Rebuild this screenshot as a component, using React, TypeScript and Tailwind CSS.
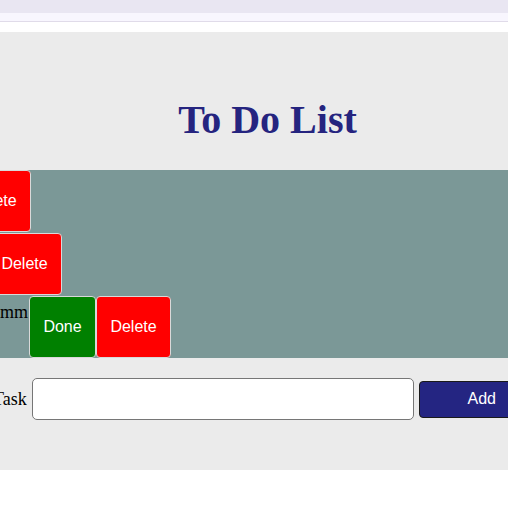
// To Do List — scrolled page view

const rows = [
  { text: "Buy milk", offset: "-ml-[111px]" },
  { text: "Walk the dog", offset: "-ml-[80px]" },
];

function Btn({ kind, children }: { kind: "done" | "delete"; children: string }) {
  return (
    <button
      className={
        (kind === "done" ? "bg-[#008000] w-[67px]" : "bg-[#ff0000] w-[75px]") +
        " h-[62px] shrink-0 rounded-[4px] border border-[#d9d9d9] text-white text-[16px] font-['Liberation_Sans',Arial,sans-serif]"
      }
    >
      {children}
    </button>
  );
}

export default function App() {
  return (
    <div className="min-h-screen bg-white overflow-hidden font-['Liberation_Serif','Times_New_Roman',serif]">
      {/* browser-ish top strip */}
      <div className="h-[13px] bg-[#e9e6f2]" />
      <div className="h-[9px] bg-[#f8f6fe] border-b border-[#e0dbe9]" />
      <div className="h-[10px]" />

      <div className="bg-[#ebebeb] h-[438px]">
        {/* Title */}
        <div className="w-[535px] h-[138px] flex items-center justify-center pt-[38px]">
          <h1 className="text-[40px] font-bold text-[#25247f] leading-none">To Do List</h1>
        </div>

        {/* Task list */}
        <div className="bg-[#7b9897] h-[188px] flex flex-col gap-px">
          {rows.map((r) => (
            <div key={r.text} className={"flex items-start " + r.offset}>
              <Btn kind="done">Done</Btn>
              <Btn kind="delete">Delete</Btn>
            </div>
          ))}
          <div className="flex items-start -ml-[14px]">
            <span className="text-[18px] text-black leading-none mt-[7px] mr-px">mmm</span>
            <Btn kind="done">Done</Btn>
            <Btn kind="delete">Delete</Btn>
          </div>
        </div>

        {/* Add form */}
        <div className="flex items-center mt-[20px] -ml-[7px]">
          <label className="text-[18px] text-black mr-[5px]">Task</label>
          <input className="w-[382px] h-[42px] shrink-0 bg-white rounded-[5px] border border-[#767676] outline-none" />
          <button className="ml-[5px] w-[126px] h-[37px] shrink-0 rounded-[4px] border border-[#1a1a1a] bg-[#242582] text-white text-[16px] font-['Liberation_Sans',Arial,sans-serif]">
            Add
          </button>
        </div>
      </div>
    </div>
  );
}
